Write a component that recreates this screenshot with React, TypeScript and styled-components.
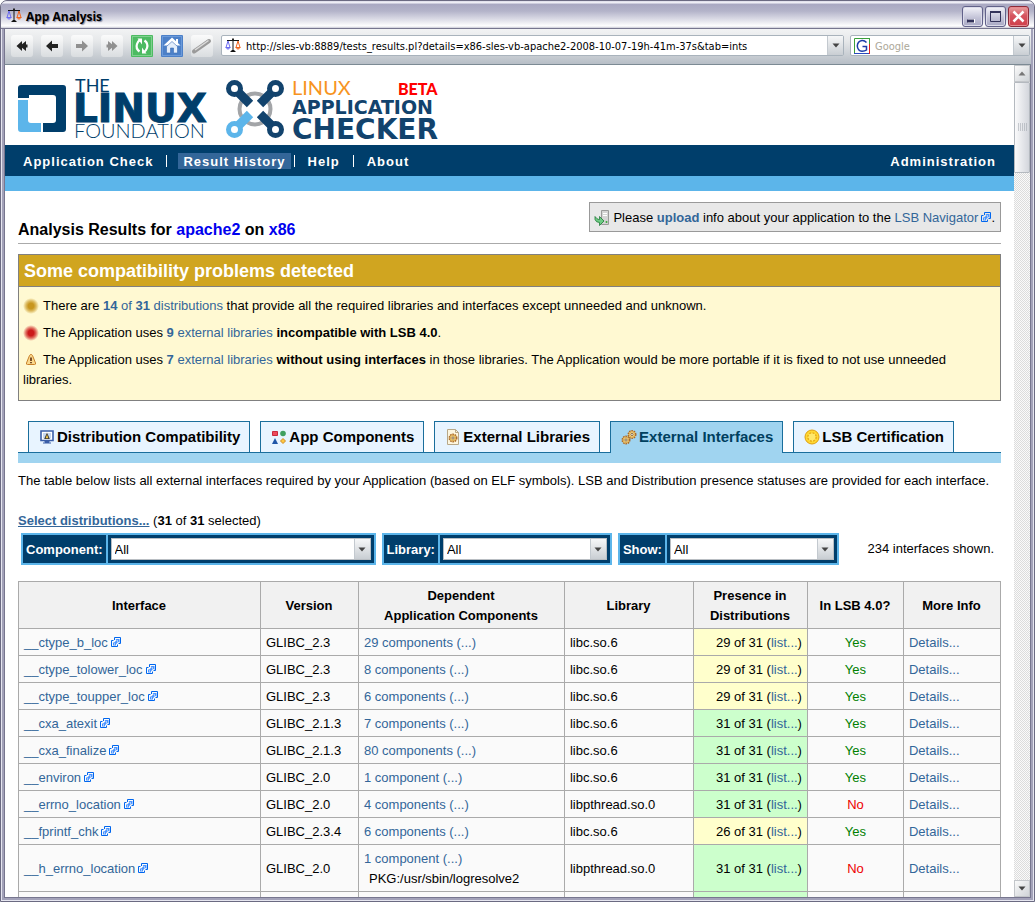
import React from "react";
import styled, { createGlobalStyle, css } from "styled-components";

const navy = "#003e6b";
const sky = "#5cb5ea";
const link = "#336699";
const sans = `"Liberation Sans", Arial, sans-serif`;
const ui = `"DejaVu Sans Condensed", Tahoma, sans-serif`;

const GlobalStyle = createGlobalStyle`
  * { box-sizing: border-box; }
  body { margin: 0; font: 13px/20px ${sans}; color: #000; background: #fff; }
  a { color: ${link}; text-decoration: none; }
  button, input, select { font: inherit; margin: 0; }
`;

/* ---------- window frame ---------- */

const Window = styled.div`
  display: flex;
  flex-direction: column;
  height: 100vh;
  padding: 0 3px 3px;
  border: 1px solid #6b6a82;
  border-radius: 7px 7px 0 0;
  background: #a3a2b9;
  box-shadow: inset 0 0 0 1px #e6e6f0;
`;

const TitleBar = styled.header`
  display: flex;
  align-items: center;
  flex: none;
  height: 28px;
  margin: 0 -3px;
  padding: 3px 5px 0 5px;
  border-radius: 6px 6px 0 0;
  border-bottom: 1px solid #77768f;
  background: linear-gradient(#dcdbe8 0, #f4f4fa 2px, #a9a8c2 3px, #b3b3c9 10px, #e4e4ec 20px, #fff 25px, #c9c9d6 27px);
`;

const WindowTitle = styled.h1`
  flex: 1;
  margin: 2px 0 0 4px;
  font: bold 12px/18px "Open Sans", "Trebuchet MS", sans-serif;
  text-shadow: 1px 1px 1px #8c8ca0;
`;

const WindowButton = styled.button<{ $close?: boolean }>`
  width: 21px;
  height: 21px;
  margin-left: 2px;
  padding: 0;
  border: 1px solid ${(p) => (p.$close ? "#8e2a38" : "#62628a")};
  border-radius: 3px;
  background: ${(p) =>
    p.$close ? "linear-gradient(#e8a0a0, #d65560 45%, #cf3f4a)" : "linear-gradient(#f4f4fa, #c4c4d8 55%, #a9a9c4)"};
  box-shadow: inset 0 0 0 1px ${(p) => (p.$close ? "#e68a90" : "#dcdcea")};
  svg { display: block; }
`;

const Toolbar = styled.div`
  display: flex;
  align-items: center;
  flex: none;
  height: 36px;
  padding: 0 1px 2px 6px;
  border-left: 1px solid #77768f;
  border-bottom: 1px solid #7c8a94;
  background: linear-gradient(#f2f3f4, #e6e8ea 12px, #b7bec6);
`;

const ToolButton = styled.button`
  width: 22px;
  height: 22px;
  margin-right: 8px;
  padding: 0;
  border: 0;
  border-radius: 3px;
  background: linear-gradient(#fbfbfb, #dadde0);
  svg { display: block; }
`;

const Field = styled.div<{ $fixed?: boolean }>`
  display: flex;
  align-items: center;
  height: 21px;
  border: 1px solid #a9b3bc;
  border-radius: 2px;
  background: #fff;
  padding-left: 3px;
  ${(p) => (p.$fixed ? css`flex: 0 0 180px; margin-left: 6px;` : css`flex: 1;`)}
`;

const FieldInput = styled.input`
  flex: 1;
  min-width: 0;
  height: 17px;
  padding: 2px 0 0 5px;
  border: 0;
  outline: 0;
  background: transparent;
  font: 11px/15px ${ui};
  color: #000;
  &::placeholder { color: #aca899; opacity: 1; }
`;

const DropButton = styled.button`
  display: flex;
  align-items: center;
  justify-content: center;
  align-self: stretch;
  width: 16px;
  padding: 0;
  border: 0;
  border-left: 1px solid #c3c9cf;
  background: linear-gradient(#f6f7f8, #c9ced3);
`;

/* ---------- viewport and scroll bar ---------- */

const Viewport = styled.div`
  display: flex;
  flex: 1;
  min-height: 0;
  border: 1px solid #77768f;
  border-top: 0;
`;

const Page = styled.div`
  flex: 1;
  min-width: 0;
  overflow: hidden;
  background: #fff;
`;

const ScrollBar = styled.div`
  display: flex;
  flex-direction: column;
  flex: 0 0 16px;
  background: repeating-conic-gradient(#dcdcdc 0 25%, #fafafa 0 50%) 0 0 / 2px 2px;
`;

const ScrollButton = styled.button`
  display: flex;
  align-items: center;
  justify-content: center;
  flex: 0 0 17px;
  width: 16px;
  padding: 0;
  border: 1px solid #c3c6ca;
  background: linear-gradient(135deg, #fafafa, #cfd3d7);
`;

const ScrollThumb = styled.div`
  display: flex;
  align-items: center;
  justify-content: center;
  flex: 0 0 91px;
  border: 1px solid #b4b9bf;
  border-radius: 1px;
  background: linear-gradient(90deg, #fafafb, #d3d6dc);
`;

const ScrollTrack = styled.div`flex: 1;`;

/* ---------- site header ---------- */

const Logos = styled.div`
  display: flex;
  gap: 7px;
  height: 80px;
  padding: 12px 0 0 13px;
  svg { display: block; flex: none; overflow: visible; }
`;

const Nav = styled.nav`
  display: flex;
  align-items: center;
  height: 31px;
  padding: 0 13px;
  background: ${navy};
  color: #fff;
  font-weight: bold;
  letter-spacing: 1px;
`;

const NavLink = styled.a<{ $active?: boolean }>`
  padding: 2px 5px 0;
  line-height: 14px;
  color: #fff;
  ${(p) => p.$active && css`margin: 0 -5px 0 3px; background: ${link};`}
`;

const Divider = styled.span`
  width: 1px;
  height: 12px;
  margin: 0 8px;
  background: #fff;
`;

const Spacer = styled.div`flex: 1;`;

const Band = styled.div`
  height: 15px;
  background: ${sky};
`;

/* ---------- results ---------- */

const Main = styled.main`padding: 11px 13px 0;`;

const Heading = styled.div`
  display: flex;
  align-items: flex-end;
  justify-content: space-between;
  padding-bottom: 11px;
  border-bottom: 1px solid #aaa;
`;

const H2 = styled.h2`
  margin: 0 0 -8px;
  font-size: 16px;
  line-height: 20px;
  span { color: #0000ee; }
`;

const UploadBox = styled.div`
  display: flex;
  align-items: center;
  height: 30px;
  padding: 1px 5px 0 4px;
  border: 1px solid #999;
  background: #e8e8e8;
  > svg { margin-right: 3px; }
`;

const Alert = styled.section`
  margin-top: 10px;
  border: 1px solid #808080;
  background: #fff9d2;
`;

const AlertTitle = styled.h3`
  margin: 0;
  padding: 1px 5px 0;
  font-size: 18px;
  line-height: 30px;
  color: #fff;
  background: #d0a520;
  border-bottom: 1px solid #808080;
`;

const Notices = styled.ul`
  margin: 0;
  padding: 9px 4px 10px;
  list-style: none;
  li + li { margin-top: 7px; }
  li > svg { vertical-align: -4px; margin-right: 4px; }
`;

const Tabs = styled.div`
  display: flex;
  gap: 10px;
  margin-top: 20px;
  padding: 0 10px;
  border-bottom: 1px solid #1a6e9c;
`;

const Tab = styled.a<{ $active?: boolean }>`
  display: flex;
  align-items: center;
  gap: 2px;
  height: ${(p) => (p.$active ? 32 : 31)}px;
  margin-bottom: ${(p) => (p.$active ? -1 : 0)}px;
  padding: 0 9px ${(p) => (p.$active ? 1 : 0)}px 10px;
  border: 1px solid #1a6e9c;
  border-bottom: 0;
  background: ${(p) => (p.$active ? "#a0d4f0" : "#e8f4ff")};
  color: ${(p) => (p.$active ? "#00405f" : "#000")};
  font-size: 15px;
  font-weight: bold;
  white-space: nowrap;
`;

const TabBand = styled.div`
  height: 10px;
  background: #a0d4f0;
`;

const Intro = styled.p`margin: 8px 0 20px;`;

const SelectLink = styled.a`
  font-weight: bold;
  text-decoration: underline;
`;

const Filters = styled.form`
  display: flex;
  align-items: center;
  gap: 6px;
  margin: 2px 0 16px;
  padding: 0 7px 0 3px;
`;

const Filter = styled.label`
  display: flex;
  height: 32px;
  border: 2px solid ${sky};
  background: ${navy};
  color: #fff;
  font-weight: bold;
  line-height: 26px;
`;

const FilterName = styled.span`
  padding: 2px 3px 0;
  border-right: 2px solid ${sky};
`;

const SelectWrap = styled.span<{ $w: number }>`
  position: relative;
  width: ${(p) => p.$w}px;
  margin: 3px;
`;

const Select = styled.select`
  display: block;
  width: 100%;
  height: 22px;
  padding: 1px 3px 0;
  border: 1px solid #b9bec3;
  border-radius: 0;
  appearance: none;
  background: #fff;
  font-weight: normal;
  line-height: 19px;
  color: #000;
`;

const SelectArrow = styled.span`
  position: absolute;
  top: 1px;
  right: 1px;
  display: flex;
  align-items: center;
  justify-content: center;
  width: 16px;
  height: 20px;
  border-left: 1px solid #c3c9cf;
  background: linear-gradient(#f6f7f8, #c9ced3);
  pointer-events: none;
`;

const Table = styled.table`
  width: 100%;
  table-layout: fixed;
  border-collapse: collapse;
  background: #fafafa;
  th, td { height: 27px; padding: 4px 5px 2px; border: 1px solid #aaa; text-align: left; }
  th { padding: 4px 4px 2px 3px; background: #f1f1f1; text-align: center; }
`;

const Presence = styled.td<{ $full: boolean }>`
  background: ${(p) => (p.$full ? "#ccffcc" : "#ffffcc")};
  && { text-align: right; }
`;

const Status = styled.td<{ $yes: boolean }>`
  color: ${(p) => (p.$yes ? "#008000" : "#ee0000")};
  && { text-align: center; }
`;

const Package = styled.div`padding-left: 5px;`;

/* ---------- icons ---------- */

const Arrow = ({ color = "#444" }: { color?: string }) => (
  <svg width="8" height="5" viewBox="0 0 8 5"><path d="M0.5 0.5h7L4 4.5z" fill={color} /></svg>
);

const Scales = () => (
  <svg width="16" height="16" viewBox="0 0 16 16" fill="none">
    <path d="M2 2.5h12M8 1v12M5.5 13.500h5M6.5 12.5h3" stroke="#111" />
    <path d="M7 1.5h2" stroke="#222" strokeWidth="2" />
    <path d="M3 3L1 9.500M3 3l2 6.500M0.5 9.500h5" stroke="#6c6cf0" />
    <path d="M1 10h4l-1 1.5H2z" fill="#8a8af8" />
    <path d="M13 3l-2 6.500M13 3l2 6.500M10.5 9.500h5" stroke="#f0641e" />
    <path d="M11 10h4l-1 1.5h-2z" fill="#f58246" />
  </svg>
);

const ExternalSvg = styled.svg`margin-left: 3px;`;

const ExternalIcon = () => (
  <ExternalSvg width="10" height="10" viewBox="0 0 10 10" fill="none">
    <path d="M3.5 3V0.5h6v6H7.5M2.5 3.5h-2v6h6v-2" stroke="#0066ee" />
    <path d="M4.5 2h4v4L7.2 4.8L5 7.2V8.5H2V5.5h1.200L5.600 3.200z" fill="#4a94ff" />
    <path d="M3 6.5h1v1H3zM6 3.5h1v1H6z" fill="#fff" />
  </ExternalSvg>
);

const Dot = ({ color, id }: { color: string; id: string }) => (
  <svg width="16" height="16" viewBox="0 0 16 16">
    <radialGradient id={id}>
      <stop offset="0.35" stopColor={color} />
      <stop offset="0.65" stopColor={color} stopOpacity="0.6" />
      <stop offset="0.85" stopColor={color} stopOpacity="0.25" />
      <stop offset="1" stopColor={color} stopOpacity="0" />
    </radialGradient>
    <circle cx="8" cy="8" r="8" fill={`url(#${id})`} />
  </svg>
);

const Warning = () => (
  <svg width="16" height="16" viewBox="0 0 16 16">
    <path d="M8 2.5q1 0 1.5 1l3 7.5q.5 1.5-1 1.5h-7q-1.5 0-1-1.5l3-7.5q.5-1 1.5-1z" fill="#fbd98c" stroke="#c8802a" />
    <path d="M7.2 5.5h1.6v3.5H7.2zM7.2 10h1.6v1.3H7.2z" fill="#5a2c10" />
  </svg>
);

const UploadIcon = () => (
  <svg width="16" height="16" viewBox="0 0 16 16">
    <path d="M7.5 0.5h7v14h-7z" fill="#d4d4d4" stroke="#9a9a9a" />
    <path d="M9 3.5h4M9 5.5h4" stroke="#fff" />
    <circle cx="12.5" cy="12" r="1" fill="#3aa53a" />
    <path d="M1 6.5l2 2.200q1 .8 2.500 .8V6.500l4.500 4.500l-4.500 4.500v-3Q2 12.500 1 9.500z" fill="#6fcb84" stroke="#1f7a38" strokeWidth="0.800" />
  </svg>
);

const MonitorIcon = () => (
  <svg width="16" height="16" viewBox="0 0 16 16">
    <path d="M2 2h12v9.5H2z" fill="#fff" stroke="#3a5ea8" strokeWidth="1.6" />
    <path d="M4 4h3v5.5H4zM9 4h3v5.5H9z" fill="#c8d8f0" />
    <path d="M8 3.5l2.8 6.5H5.200z" fill="#333" />
    <path d="M8 5.5l1.4 3.7H6.600z" fill="#f4c84a" />
    <path d="M6 12h4v1.5H6zM4 14h8" fill="#3a5ea8" stroke="#3a5ea8" />
  </svg>
);

const ShapesIcon = () => (
  <svg width="16" height="16" viewBox="0 0 16 16">
    <path d="M1.5 2.5h5v4h-5z" fill="#ee4a5c" stroke="#c82a3c" />
    <circle cx="12" cy="4.5" r="2.8" fill="#3fa060" />
    <path d="M4 9l3 6H1z" fill="#1f56a8" />
    <path d="M12 9.5l2.5 2.5l-2.5 2.5L9.500 12z" fill="#ffc840" stroke="#d08a20" />
  </svg>
);

const Gear = ({ x, y, r }: { x: number; y: number; r: number }) => (
  <g transform={`translate(${x} ${y})`}>
    <circle r={r} fill="#f8d878" stroke="#a8682a" strokeWidth="1.4" strokeDasharray="1.6 0.8" />
    <circle r={r * 0.7} fill="#fbe08a" stroke="#c48a3a" strokeWidth="0.6" />
    <circle r={r * 0.3} fill="#fff" stroke="#7a5a3a" strokeWidth="0.9" />
  </g>
);

const FileGearIcon = () => (
  <svg width="16" height="16" viewBox="0 0 16 16">
    <path d="M2.5 0.5h8l3 3v12h-11z" fill="#fdf6e0" stroke="#b8a888" />
    <path d="M10.5 0.5v3h3" fill="none" stroke="#b8a888" />
    <Gear x={8} y={9} r={3.8} />
  </svg>
);

const GearsIcon = () => (
  <svg width="16" height="16" viewBox="0 0 16 16">
    <Gear x={11} y={5.5} r={3.8} />
    <Gear x={5} y={11} r={3.8} />
  </svg>
);

const MedalIcon = () => (
  <svg width="16" height="16" viewBox="0 0 16 16">
    <circle cx="8" cy="8" r="7" fill="#ffd832" stroke="#e0a010" />
    <circle cx="8" cy="8" r="4.2" fill="#ffe86a" stroke="#e8ac18" strokeWidth="1.4" strokeDasharray="2 1.3" />
  </svg>
);

const LinuxFoundationLogo = () => (
  <svg width="197" height="66" viewBox="18 77 197 66">
    <path fillRule="evenodd" d="M21 85h42q3 0 3 3v41q0 3-3 3H43v-9h10q3 0 3-3V98q0-3-3-3H29v3H18V88q0-3 3-3z" fill={navy} />
    <path d="M18 100h10v20q0 3 3 3h10v9H21q-3 0-3-3z" fill={sky} />
    <text x="75" y="92" fontFamily="Lato" fontSize="18" fill={navy}>THE</text>
    <text x="73" y="122" fontFamily="DejaVu Sans" fontSize="39" fontWeight="700" fill={navy} stroke={navy}>LINUX</text>
    <text x="74" y="138" fontFamily="Lato" fontSize="20" fontWeight="300" fill={navy}>FOUNDATION</text>
  </svg>
);

const CheckerLogo = () => (
  <svg width="222" height="66" viewBox="222 77 222 66">
    <circle cx="255" cy="109" r="15.5" fill="none" stroke="#a3a5a8" strokeWidth="4" strokeDasharray="17 7.35" strokeDashoffset="8.5" />
    <g fill="none" strokeWidth="5" stroke="#12436d">
      <circle cx="234.5" cy="88.5" r="6" />
      <circle cx="275.5" cy="88.5" r="6" />
      <circle cx="275.5" cy="129.5" r="6" />
      <circle cx="234.5" cy="129.5" r="6" stroke={sky} />
    </g>
    <g strokeWidth="9" stroke="#12436d">
      <path d="M239 93l11 11M271 93l-11 11M271 125l-11-11" />
      <path d="M239 125l11-11" stroke={sky} />
    </g>
    <text x="292" y="95" fontFamily="Lato" fontSize="20" fill="#f7941e">LINUX</text>
    <text x="398" y="95" fontFamily="Lato" fontSize="16" fontWeight="900" fill="#ff0000">BETA</text>
    <text x="292" y="114" fontFamily="DejaVu Sans" fontSize="19" fontWeight="700" fill="#12436d">APPLICATION</text>
    <text x="292" y="139" fontFamily="DejaVu Sans" fontSize="28" fontWeight="700" fill="#12436d">CHECKER</text>
  </svg>
);

const BackAll = ({ flip, color }: { flip?: boolean; color: string }) => (
  <svg width="22" height="22" viewBox="0 0 22 22">
    <g transform={flip ? "translate(22 0) scale(-1 1)" : undefined} fill={color}>
      <path d="M5.500 11l5.500-5v3.300L15 6v3.500h1.500v3H15V16l-4-3.300V16z" />
    </g>
  </svg>
);

const Back = ({ flip, color }: { flip?: boolean; color: string }) => (
  <svg width="22" height="22" viewBox="0 0 22 22">
    <path
      transform={flip ? "translate(22 0) scale(-1 1)" : undefined}
      d="M5 11l6-5.5v3.500h6v4h-6v3.500z"
      fill={color}
    />
  </svg>
);

const Reload = () => (
  <svg width="22" height="22" viewBox="0 0 22 22">
    <rect width="22" height="22" rx="1" fill="#4dbb62" />
    <rect x="1.5" y="1.5" width="19" height="19" fill="none" stroke="#7fd08e" />
    <path d="M8.500 16.500Q4.500 13.500 6 9q1-3 3-4" fill="none" stroke="#fff" strokeWidth="2.2" />
    <path d="M13.500 5.500q4 3 2.500 7.500q-1 3-3 4" fill="none" stroke="#fff" strokeWidth="2.2" />
    <path d="M6.500 3.500h4.500v6zM15.500 18.500h-4.500v-6z" fill="#fff" />
  </svg>
);

const Home = () => (
  <svg width="22" height="22" viewBox="0 0 22 22">
    <rect width="22" height="22" rx="1" fill="#4c80c8" />
    <rect x="1.5" y="1.5" width="19" height="19" fill="none" stroke="#6b9ada" />
    <path d="M11 2.5l8.5 8h-17z" fill="#fff" />
    <path d="M15 4h2v4h-2z" fill="#fff" />
    <path d="M5.5 11.5L11 6.500l5.500 5V18h-4v-5h-3v5h-4z" fill="#e4eefb" stroke="#3a6cb4" strokeWidth="0.6" />
  </svg>
);

const Pencil = () => (
  <svg width="22" height="22" viewBox="0 0 22 22">
    <path d="M3 16.500L18 6" stroke="#9a9a9a" strokeWidth="4" strokeLinecap="round" />
    <path d="M4 15L17.500 5.500" stroke="#dcdcdc" strokeWidth="1.5" />
  </svg>
);

const GoogleIcon = () => (
  <svg width="16" height="16" viewBox="0 0 16 16" fill="none">
    <path d="M0.5 15.5V0.500h15" stroke="#3aa03a" />
    <path d="M15.5 5v11" stroke="#e02020" />
    <path d="M15.5 0v6" stroke="#3aa03a" />
    <path d="M0 15.5h15" stroke="#2a4ac0" />
    <path d="M12.5 4.5Q10.500 2.300 8 2.500Q3.500 3.200 3.300 8Q3.700 13 8 13.300Q11 13.200 12.500 12V8.500H8.500" stroke="#1c3ca8" strokeWidth="1.5" />
  </svg>
);

/* ---------- data ---------- */

type Row = {
  name: string;
  version: string;
  components: string;
  library: string;
  present: number;
  lsb: boolean;
  pkg?: string;
};

const rows: Row[] = [
  { name: "__ctype_b_loc", version: "GLIBC_2.3", components: "29 components", library: "libc.so.6", present: 29, lsb: true },
  { name: "__ctype_tolower_loc", version: "GLIBC_2.3", components: "8 components", library: "libc.so.6", present: 29, lsb: true },
  { name: "__ctype_toupper_loc", version: "GLIBC_2.3", components: "6 components", library: "libc.so.6", present: 29, lsb: true },
  { name: "__cxa_atexit", version: "GLIBC_2.1.3", components: "7 components", library: "libc.so.6", present: 31, lsb: true },
  { name: "__cxa_finalize", version: "GLIBC_2.1.3", components: "80 components", library: "libc.so.6", present: 31, lsb: true },
  { name: "__environ", version: "GLIBC_2.0", components: "1 component", library: "libc.so.6", present: 31, lsb: true },
  { name: "__errno_location", version: "GLIBC_2.0", components: "4 components", library: "libpthread.so.0", present: 31, lsb: false },
  { name: "__fprintf_chk", version: "GLIBC_2.3.4", components: "6 components", library: "libc.so.6", present: 26, lsb: true },
  { name: "__h_errno_location", version: "GLIBC_2.0", components: "1 component", library: "libpthread.so.0", present: 31, lsb: false, pkg: "PKG:/usr/sbin/logresolve2" },
];

const columnWidths = [242, 98, 206, 129, 114, 96, 97];
const columnTotal = columnWidths.reduce((a, b) => a + b, 0);

const filters = [
  { label: "Component:", width: 260 },
  { label: "Library:", width: 164 },
  { label: "Show:", width: 164 },
];

/* ---------- page ---------- */

export default function App() {
  return (
    <>
      <GlobalStyle />
      <Window>
        <TitleBar>
          <Scales />
          <WindowTitle>App Analysis</WindowTitle>
          <WindowButton aria-label="Minimize">
            <svg width="19" height="19"><path d="M5 14h7" stroke="#fff" strokeWidth="4" /><path d="M4 14h7" stroke="#33335a" strokeWidth="3" /></svg>
          </WindowButton>
          <WindowButton aria-label="Maximize">
            <svg width="19" height="19"><path d="M4.5 5h10v9.5h-10z" fill="none" stroke="#33335a" /><path d="M4 5h11" stroke="#33335a" strokeWidth="2" /></svg>
          </WindowButton>
          <WindowButton $close aria-label="Close">
            <svg width="19" height="19"><path d="M4.5 4.5l10 10M14.5 4.5l-10 10" stroke="#fff" strokeWidth="2.5" /></svg>
          </WindowButton>
        </TitleBar>

        <Toolbar>
          <ToolButton aria-label="Rewind"><BackAll color="#222" /></ToolButton>
          <ToolButton aria-label="Back"><Back color="#222" /></ToolButton>
          <ToolButton aria-label="Forward"><Back flip color="#909090" /></ToolButton>
          <ToolButton aria-label="Fast forward"><BackAll flip color="#909090" /></ToolButton>
          <ToolButton aria-label="Reload"><Reload /></ToolButton>
          <ToolButton aria-label="Home"><Home /></ToolButton>
          <ToolButton aria-label="Edit"><Pencil /></ToolButton>
          <Field>
            <Scales />
            <FieldInput
              aria-label="Address"
              defaultValue="http://sles-vb:8889/tests_results.pl?details=x86-sles-vb-apache2-2008-10-07-19h-41m-37s&tab=ints"
            />
            <DropButton aria-label="Address history"><Arrow /></DropButton>
          </Field>
          <Field $fixed>
            <GoogleIcon />
            <FieldInput aria-label="Search" placeholder="Google" />
            <DropButton aria-label="Search engines"><Arrow /></DropButton>
          </Field>
        </Toolbar>

        <Viewport>
          <Page>
            <Logos>
              <LinuxFoundationLogo />
              <CheckerLogo />
            </Logos>
            <Nav>
              <NavLink href="#">Application Check</NavLink>
              <Divider />
              <NavLink href="#" $active>Result History</NavLink>
              <Divider />
              <NavLink href="#">Help</NavLink>
              <Divider />
              <NavLink href="#">About</NavLink>
              <Spacer />
              <NavLink href="#">Administration</NavLink>
            </Nav>
            <Band />

            <Main>
              <Heading>
                <H2>Analysis Results for <span>apache2</span> on <span>x86</span></H2>
                <UploadBox>
                  <UploadIcon />
                  <div>
                    Please <a href="#"><b>upload</b></a> info about your application to the{" "}
                    <a href="#">LSB Navigator<ExternalIcon /></a>.
                  </div>
                </UploadBox>
              </Heading>

              <Alert>
                <AlertTitle>Some compatibility problems detected</AlertTitle>
                <Notices>
                  <li>
                    <Dot color="#c8961e" id="dot-amber" />
                    There are <a href="#"><b>14</b> of <b>31</b> distributions</a> that provide all the required
                    libraries and interfaces except unneeded and unknown.
                  </li>
                  <li>
                    <Dot color="#cc1a1a" id="dot-red" />
                    The Application uses <a href="#"><b>9</b> external libraries</a> <b>incompatible with LSB 4.0</b>.
                  </li>
                  <li>
                    <Warning />
                    The Application uses <a href="#"><b>7</b> external libraries</a> <b>without using interfaces</b> in
                    those libraries. The Application would be more portable if it is fixed to not use unneeded
                    libraries.
                  </li>
                </Notices>
              </Alert>

              <Tabs>
                <Tab href="#"><MonitorIcon />Distribution Compatibility</Tab>
                <Tab href="#"><ShapesIcon />App Components</Tab>
                <Tab href="#"><FileGearIcon />External Libraries</Tab>
                <Tab href="#" $active><GearsIcon />External Interfaces</Tab>
                <Tab href="#"><MedalIcon />LSB Certification</Tab>
              </Tabs>
              <TabBand />

              <Intro>
                The table below lists all external interfaces required by your Application (based on ELF symbols). LSB
                and Distribution presence statuses are provided for each interface.
              </Intro>
              <div>
                <SelectLink href="#">Select distributions...</SelectLink> (<b>31</b> of <b>31</b> selected)
              </div>

              <Filters>
                {filters.map((f) => (
                  <Filter key={f.label}>
                    <FilterName>{f.label}</FilterName>
                    <SelectWrap $w={f.width}>
                      <Select><option>All</option></Select>
                      <SelectArrow><Arrow /></SelectArrow>
                    </SelectWrap>
                  </Filter>
                ))}
                <Spacer />
                <span>234 interfaces shown.</span>
              </Filters>

              <Table>
                <colgroup>
                  {columnWidths.map((w, i) => (
                    <col key={i} style={{ width: `${(w / columnTotal) * 100}%` }} />
                  ))}
                </colgroup>
                <thead>
                  <tr>
                    <th>Interface</th>
                    <th>Version</th>
                    <th>Dependent<br />Application Components</th>
                    <th>Library</th>
                    <th>Presence in<br />Distributions</th>
                    <th>In LSB 4.0?</th>
                    <th>More Info</th>
                  </tr>
                </thead>
                <tbody>
                  {rows.map((r) => (
                    <tr key={r.name}>
                      <td><a href="#">{r.name}<ExternalIcon /></a></td>
                      <td>{r.version}</td>
                      <td>
                        <a href="#">{r.components} (...)</a>
                        {r.pkg && <Package>{r.pkg}</Package>}
                      </td>
                      <td>{r.library}</td>
                      <Presence $full={r.present === 31}>{r.present} of 31 (<a href="#">list...</a>)</Presence>
                      <Status $yes={r.lsb}>{r.lsb ? "Yes" : "No"}</Status>
                      <td><a href="#">Details...</a></td>
                    </tr>
                  ))}
                  <tr>
                    <td /><td /><td /><td />
                    <Presence $full />
                    <td /><td />
                  </tr>
                </tbody>
              </Table>
            </Main>
          </Page>
          <ScrollBar>
            <ScrollButton aria-label="Scroll up"><svg width="8" height="5"><path d="M0.5 4.5h7L4 0.500z" fill="#777" /></svg></ScrollButton>
            <ScrollThumb>
              <svg width="9" height="9"><path d="M0 1h9M0 3h9M0 5h9M0 7h9" stroke="#9aa0a8" strokeDasharray="1 1" /></svg>
            </ScrollThumb>
            <ScrollTrack />
            <ScrollButton aria-label="Scroll down"><Arrow /></ScrollButton>
          </ScrollBar>
        </Viewport>
      </Window>
    </>
  );
}
